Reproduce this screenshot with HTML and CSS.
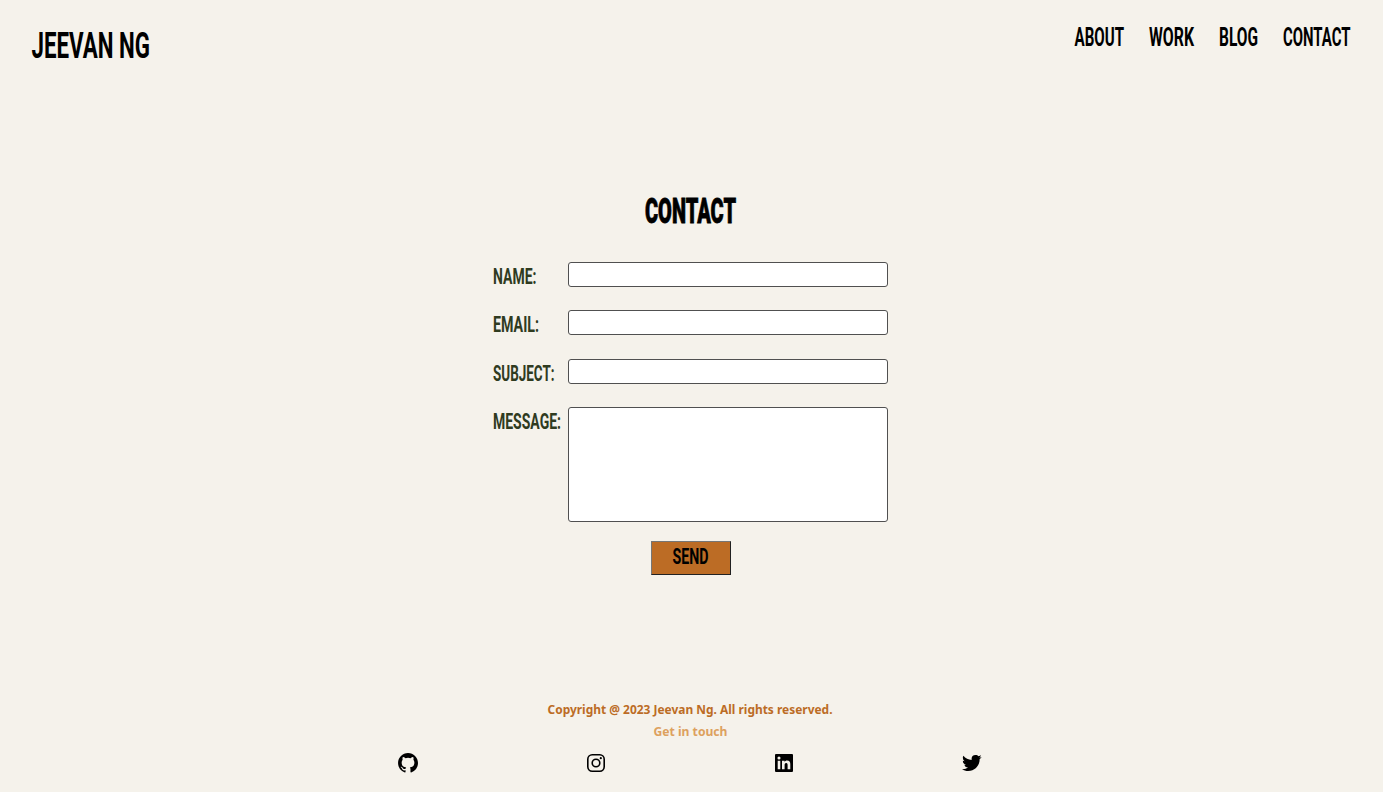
FILE: index.html
```html
<!DOCTYPE html>
<html lang="en">
<head>
<meta charset="utf-8">
<title>Jeevan Ng</title>
<link rel="stylesheet" href="styles.css">
</head>
<body>
<header class="header">
  <svg class="logo" width="119" height="28"><text x="-0.5" y="27" textLength="118.5" lengthAdjust="spacingAndGlyphs">JEEVAN NG</text></svg>
  <nav class="nav">
    <a><svg width="50" height="24"><text x="0.5" y="18" textLength="49.5" lengthAdjust="spacingAndGlyphs">ABOUT</text></svg></a>
    <a><svg width="45" height="24"><text x="0" y="18" textLength="45" lengthAdjust="spacingAndGlyphs">WORK</text></svg></a>
    <a><svg width="39" height="24"><text x="0" y="18" textLength="39" lengthAdjust="spacingAndGlyphs">BLOG</text></svg></a>
    <a><svg width="68" height="24"><text x="0" y="18" textLength="67.5" lengthAdjust="spacingAndGlyphs">CONTACT</text></svg></a>
  </nav>
</header>
<main class="main">
  <h1 class="title"><svg width="91" height="26"><text x="0" y="25" textLength="91" lengthAdjust="spacingAndGlyphs">CONTACT</text></svg></h1>
  <form class="form">
    <label><svg width="75" height="20"><text x="0" y="17" textLength="43.5" lengthAdjust="spacingAndGlyphs">NAME:</text></svg></label>
    <input class="field" type="text">
    <label><svg width="75" height="20"><text x="0" y="17" textLength="46" lengthAdjust="spacingAndGlyphs">EMAIL:</text></svg></label>
    <input class="field" type="text">
    <label><svg width="75" height="20"><text x="0" y="17" textLength="61.5" lengthAdjust="spacingAndGlyphs">SUBJECT:</text></svg></label>
    <input class="field" type="text">
    <label><svg width="75" height="20"><text x="0" y="17" textLength="68" lengthAdjust="spacingAndGlyphs">MESSAGE:</text></svg></label>
    <textarea class="field message"></textarea>
  </form>
  <button class="send"><svg width="36" height="18"><text x="-.5" y="17" textLength="36" lengthAdjust="spacingAndGlyphs">SEND</text></svg></button>
</main>
<footer class="footer">
  <svg class="copyright" width="286" height="18"><text x="0.5" y="14" textLength="285" lengthAdjust="spacingAndGlyphs">Copyright @ 2023 Jeevan Ng. All rights reserved.</text></svg>
  <svg class="touch" width="75" height="18"><text x="0.5" y="14" textLength="74" lengthAdjust="spacingAndGlyphs">Get in touch</text></svg>
  <div class="social">
    <svg viewBox="0 0 24 24"><path d="M12.026 2c-5.509 0-9.974 4.465-9.974 9.974 0 4.406 2.857 8.145 6.821 9.465.499.09.679-.217.679-.481 0-.237-.008-.865-.011-1.696-2.775.602-3.361-1.338-3.361-1.338-.452-1.152-1.107-1.459-1.107-1.459-.905-.619.069-.605.069-.605 1.002.07 1.527 1.028 1.527 1.028.89 1.524 2.336 1.084 2.902.829.091-.645.351-1.085.635-1.334-2.214-.251-4.542-1.107-4.542-4.93 0-1.087.389-1.979 1.024-2.675-.101-.253-.446-1.268.099-2.64 0 0 .837-.269 2.742 1.021a9.582 9.582 0 0 1 2.496-.336 9.554 9.554 0 0 1 2.496.336c1.906-1.291 2.742-1.021 2.742-1.021.545 1.372.203 2.387.099 2.64.64.696 1.024 1.587 1.024 2.675 0 3.833-2.33 4.675-4.552 4.922.355.308.675.916.675 1.846 0 1.334-.012 2.41-.012 2.737 0 .267.178.577.687.479C19.146 20.115 22 16.379 22 11.974 22 6.465 17.535 2 12.026 2z"/></svg>
    <svg viewBox="0 0 24 24"><rect x="3.8" y="3.8" width="16.4" height="16.4" rx="4.4" fill="none" stroke="#000" stroke-width="1.6"/><circle cx="12" cy="12" r="3.8" fill="none" stroke="#000" stroke-width="1.6"/><circle cx="16.8" cy="7.2" r="1.1"/></svg>
    <svg viewBox="0 0 24 24"><path fill-rule="evenodd" d="M4 3h16a1 1 0 0 1 1 1v16a1 1 0 0 1-1 1H4a1 1 0 0 1-1-1V4a1 1 0 0 1 1-1zM5.7 9.7v8.6h2.6V9.7zM7 5.5a1.55 1.55 0 1 0 0 3.1 1.55 1.55 0 0 0 0-3.1zM10 9.7v8.6h2.6v-4.2c0-1.1.2-2.2 1.6-2.2 1.3 0 1.4 1.2 1.4 2.3v4.1h2.7v-4.7c0-2.3-.5-4.1-3.2-4.1-1.3 0-2.2.7-2.5 1.4v-1.2z"/></svg>
    <svg viewBox="0 0 24 24"><path d="M19.633 7.997c.013.175.013.349.013.523 0 5.325-4.053 11.461-11.46 11.461-2.282 0-4.402-.661-6.186-1.809.324.037.636.05.973.05a8.07 8.07 0 0 0 5.001-1.721 4.036 4.036 0 0 1-3.767-2.793c.249.037.499.062.761.062.361 0 .724-.05 1.061-.137a4.027 4.027 0 0 1-3.23-3.953v-.05c.537.299 1.16.486 1.82.511a4.022 4.022 0 0 1-1.796-3.354c0-.748.199-1.434.548-2.032a11.457 11.457 0 0 0 8.306 4.215c-.062-.3-.1-.611-.1-.923a4.026 4.026 0 0 1 4.028-4.028c1.16 0 2.207.486 2.943 1.272a7.957 7.957 0 0 0 2.556-.973 4.02 4.02 0 0 1-1.771 2.22 8.073 8.073 0 0 0 2.319-.624 8.645 8.645 0 0 1-2.019 2.083z"/></svg>
  </div>
</footer>
</body>
</html>
```

FILE: styles.css
```css
* { box-sizing: border-box; }
html { background: #fff; }
body {
  margin: 0;
  width: 1383px;
  height: 792px;
  display: flex;
  flex-direction: column;
  background: #f5f2eb;
  font-family: Roboto, "Liberation Sans", sans-serif;
  font-weight: 700;
}
svg { display: block; overflow: visible; }
.header {
  display: flex;
  justify-content: space-between;
  align-items: flex-start;
  height: 198px;
  padding: 28px 32px 0 32px;
}
.logo { margin-top: 3px; font-size: 37.5px; }
.nav { display: flex; gap: 25px; font-size: 25px; }
.main { display: flex; flex-direction: column; align-items: center; padding-right: 2px; }
.title { margin: 0; font-size: 34.5px; font-weight: 900; }
.title text { stroke: #000; stroke-width: .8px; }
.form {
  display: grid;
  grid-template-columns: 75px 320px;
  row-gap: 23.4px;
  margin-top: 38px;
  font-size: 22.7px;
  fill: #2f3b1f;
}
.form label { padding-top: 5px; height: 25px; }
.field {
  width: 320px;
  height: 25px;
  margin: 0;
  background: #fff;
  border: 1px solid #505050;
  border-radius: 3px;
  resize: none;
}
.message { height: 115px; }
.send {
  display: flex;
  justify-content: center;
  width: 80px;
  height: 34px;
  margin-top: 18.8px;
  padding: 5px 0 0;
  background: #bc6c25;
  border: 1.5px solid;
  border-color: #767676 #212121 #212121 #767676;
  font: 700 22.7px Roboto, sans-serif;
}
.footer {
  display: flex;
  flex-direction: column;
  align-items: center;
  margin-top: auto;
  padding: 0 3px 17.5px 0;
  font-family: "Noto Sans", sans-serif;
  font-size: 12.5px;
}
.copyright { fill: #bc6c25; }
.touch { margin-top: 4px; fill: #dda15e; }
.social {
  display: flex;
  justify-content: space-between;
  width: 588px;
  margin-top: 10.5px;
}
.social svg { width: 24px; height: 24px; }
```
